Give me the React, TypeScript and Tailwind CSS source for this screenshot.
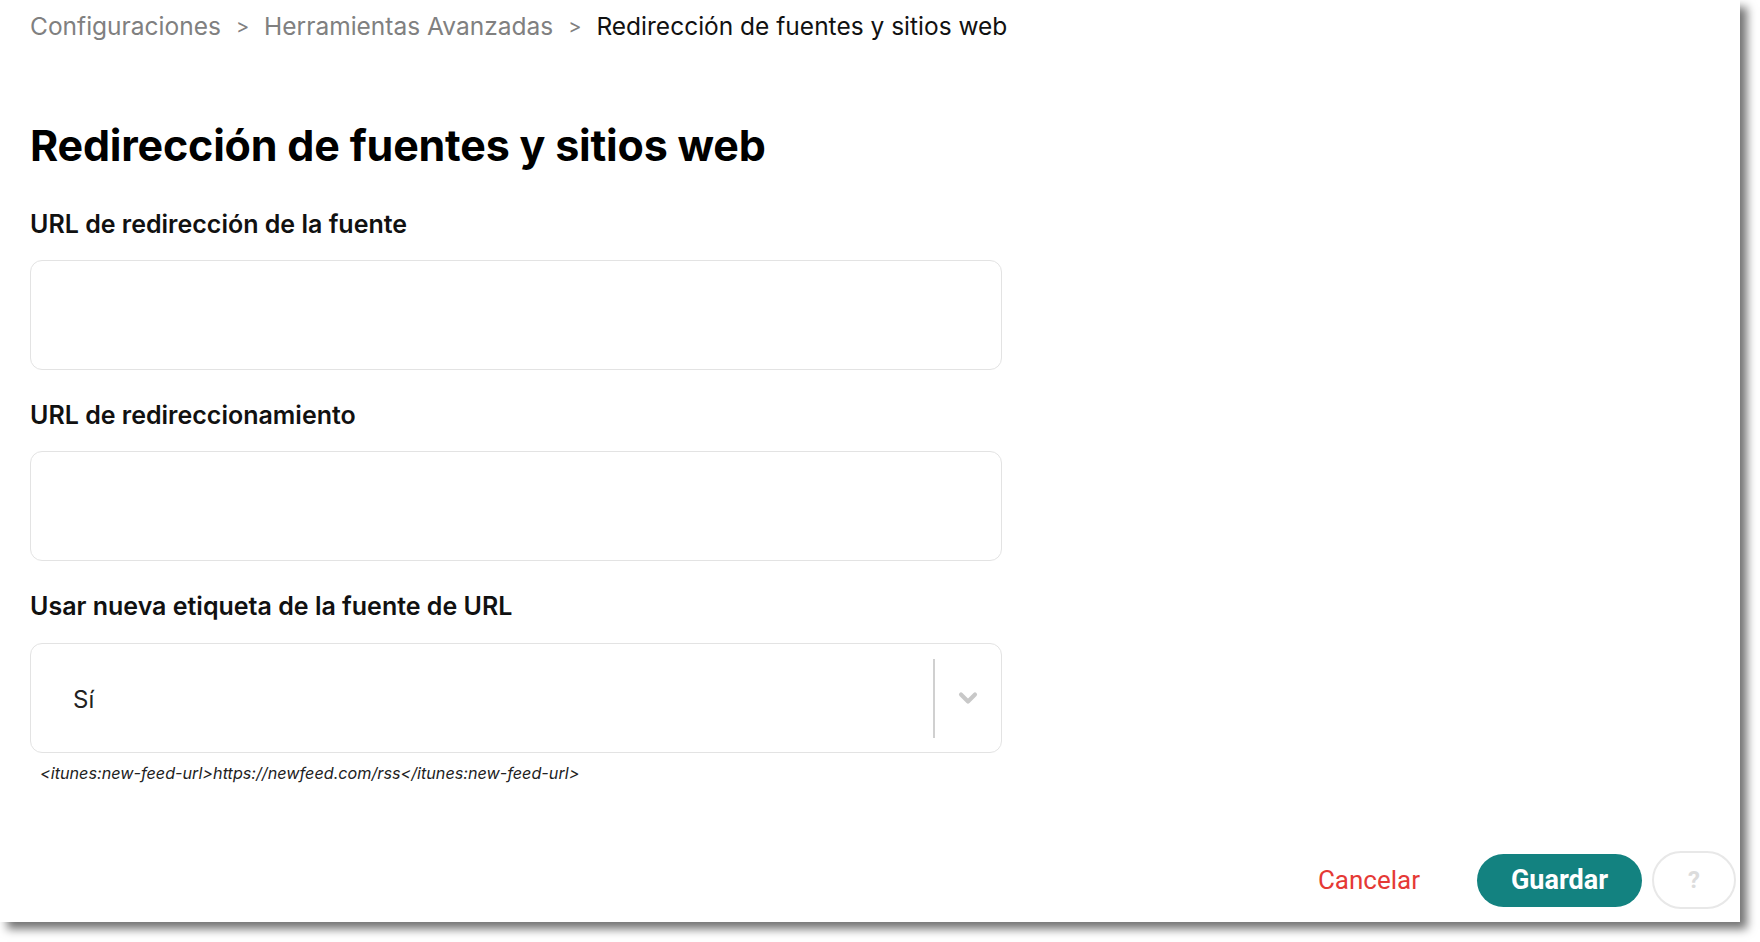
import { ChevronDown } from 'lucide-react';

const crumbs = ['Configuraciones', 'Herramientas Avanzadas'];

function Field({ label, className = '' }: { label: string; className?: string }) {
  return (
    <div className={className}>
      <label className="block text-[25px] leading-[28px] font-semibold text-[#111]">{label}</label>
      <input
        type="text"
        className="mt-[22px] block w-[972px] h-[110px] rounded-[12px] border border-[#e3e3e3] bg-white px-[42px] text-[24px] outline-none"
      />
    </div>
  );
}

export default function App() {
  return (
    <div className="w-[1760px] h-[942px] bg-white overflow-hidden font-['Inter',sans-serif]">
      <div className="w-[1740px] h-[922px] bg-white shadow-[7px_7px_9px_rgba(0,0,0,0.55)] flex flex-col">
        <div className="pl-[30px]">
          {/* Breadcrumb */}
          <nav className="pt-[10px] flex items-center text-[24.5px] leading-[32px] text-[#808080]">
            {crumbs.map((c) => (
              <span key={c} className="flex items-center">
                <span>{c}</span>
                <span className="mx-[15px] text-[20px]">&gt;</span>
              </span>
            ))}
            <span className="text-[#111]">Redirección de fuentes y sitios web</span>
          </nav>

          <h1 className="mt-[80px] text-[43px] leading-[46px] font-bold text-black tracking-[-0.2px]">
            Redirección de fuentes y sitios web
          </h1>

          <Field label="URL de redirección de la fuente" className="mt-[42px]" />
          <Field label="URL de redireccionamiento" className="mt-[31px]" />

          <div className="mt-[31px]">
            <label className="block text-[25px] leading-[28px] font-semibold text-[#111]">
              Usar nueva etiqueta de la fuente de URL
            </label>
            <div className="mt-[23px] w-[972px] h-[110px] rounded-[12px] border border-[#e3e3e3] bg-white flex items-center">
              <span className="flex-1 pl-[42px] pt-[4px] text-[24px] text-[#222]">Sí</span>
              <div className="w-[2px] h-[79px] bg-[#d0d0d0]" />
              <div className="w-[66px] flex justify-center">
                <ChevronDown className="w-[28px] h-[28px] text-[#c8c8c8]" strokeWidth={3.5} />
              </div>
            </div>
            <p className="mt-[10px] pl-[10px] text-[16.2px] leading-[20px] italic text-[#222]">
              {'<itunes:new-feed-url>https://newfeed.com/rss</itunes:new-feed-url>'}
            </p>
          </div>
        </div>

        {/* Actions */}
        <div className="mt-[68px] pr-[4px] flex items-center justify-end font-['Roboto',sans-serif]">
          <button className="text-[26px] text-[#e53935]">Cancelar</button>
          <button className="ml-[57px] w-[165px] h-[53px] rounded-full bg-[#138280] text-white text-[27px] font-bold">
            Guardar
          </button>
          <button className="ml-[10px] w-[84px] h-[58px] rounded-full border-2 border-[#e8e8e8] text-[#dcdcdc] text-[24px] font-bold">
            ?
          </button>
        </div>
      </div>
    </div>
  );
}
